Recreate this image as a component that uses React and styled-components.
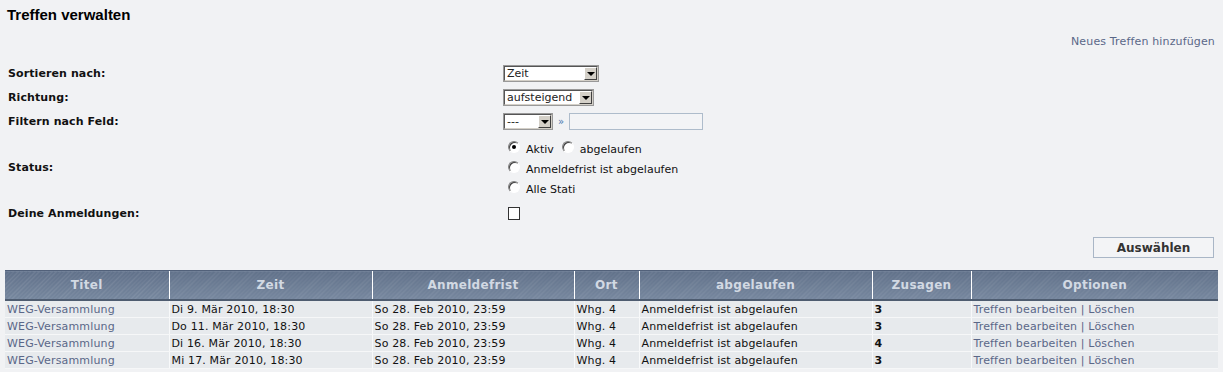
import React from 'react'
import styled, { createGlobalStyle } from 'styled-components'

const GlobalStyle = createGlobalStyle`
  html, body {
    margin: 0;
    padding: 0;
    background: #f1f2f4;
  }
  body {
    font-family: "DejaVu Sans", Verdana, sans-serif;
    font-size: 11px;
    color: #000;
  }
`

const Page = styled.div`
  width: 1223px;
  height: 372px;
  overflow: hidden;
  padding: 0 5px 0 5px;
  box-sizing: border-box;
`

const Title = styled.h2`
  margin: 0;
  padding: 6px 0 0 2px;
  height: 19px;
  font-family: "Liberation Sans", Arial, sans-serif;
  font-size: 15px;
  font-weight: bold;
  color: #000;
`

const ActionBar = styled.div`
  display: flex;
  justify-content: flex-end;
  padding: 10px 3px 0 0;
  height: 14px;
`

const Link = styled.a`
  color: #5a6788;
  text-decoration: none;
  font-size: 11px;
  letter-spacing: 0.15px;
`

const FormGrid = styled.div`
  display: grid;
  grid-template-columns: 495px 1fr;
  row-gap: 7px;
  padding: 16px 0 0 3px;
  align-items: center;
`

const Label = styled.div`
  font-weight: bold;
  font-size: 11px;
  letter-spacing: 0.1px;
  color: #111;
`

const Controls = styled.div`
  display: flex;
  align-items: center;
  gap: 4px;
  min-height: 17px;
`

const SelectBox = styled.div`
  display: flex;
  align-items: stretch;
  width: ${p => p.$width}px;
  height: 17px;
  box-sizing: border-box;
  background: #fff;
  border: 2px solid;
  border-color: #555 #d4d0c8 #d4d0c8 #555;
  outline: 1px solid #999;
  outline-offset: -1px;
  font-size: 11px;
`

const SelectText = styled.span`
  flex: 1;
  padding-left: 2px;
  line-height: 13px;
  color: #222;
  white-space: nowrap;
  overflow: hidden;
`

const SelectArrow = styled.span`
  width: 13px;
  background: #d4d0c8;
  border: 1px solid;
  border-color: #fff #404040 #404040 #fff;
  box-sizing: border-box;
  display: flex;
  align-items: center;
  justify-content: center;
  &::after {
    content: '';
    border-left: 4px solid transparent;
    border-right: 4px solid transparent;
    border-top: 4px solid #000;
  }
`

const Raquo = styled.span`
  color: #4a78b0;
  font-size: 10px;
  margin: 0 1px;
`

const TextInput = styled.div`
  width: 134px;
  height: 17px;
  box-sizing: border-box;
  border: 1px solid #aebccb;
  background: #f3f4f6;
`

const RadioStack = styled.div`
  display: flex;
  flex-direction: column;
  gap: 7px;
  padding: 6px 0 2px 5px;
`

const RadioLine = styled.div`
  display: flex;
  align-items: center;
  height: 13px;
`

const Radio = styled.span`
  width: 12px;
  height: 12px;
  box-sizing: border-box;
  border-radius: 50%;
  border: 1px solid;
  border-color: #808080 #fff #fff #808080;
  background: #fff;
  box-shadow: inset 1px 1px 0 #404040;
  display: inline-flex;
  align-items: center;
  justify-content: center;
  margin: -6px 6px 0 0;
  &::after {
    content: '';
    width: 4px;
    height: 4px;
    border-radius: 50%;
    background: ${p => (p.$checked ? '#000' : 'transparent')};
  }
`

const RadioLabel = styled.span`
  font-size: 11px;
  color: #111;
  margin-right: 8px;
`

const CheckBox = styled.span`
  width: 12px;
  height: 13px;
  box-sizing: border-box;
  border: 1px solid #333;
  background: #fff;
  margin-left: 5px;
`

const ButtonRow = styled.div`
  display: flex;
  justify-content: flex-end;
  padding: 15px 4px 0 0;
`

const Button = styled.button`
  width: 121px;
  height: 21px;
  background: #f3f4f6;
  border: 1px solid #a9b6c6;
  font-family: "DejaVu Sans", Verdana, sans-serif;
  font-size: 12px;
  font-weight: bold;
  color: #333;
  padding: 0;
`

const Table = styled.table`
  width: 1213px;
  margin-top: 12px;
  border-collapse: collapse;
  table-layout: fixed;
`

const Th = styled.th`
  height: 28px;
  padding: 0;
  border-left: 1px solid #fff;
  border-bottom: 2px solid #4e5c70;
  border-top: 1px solid #52617a;
  background: repeating-linear-gradient(
      135deg,
      rgba(255, 255, 255, 0.08) 0px,
      rgba(255, 255, 255, 0.08) 1px,
      rgba(0, 0, 0, 0) 1px,
      rgba(0, 0, 0, 0) 3px
    ),
    linear-gradient(#61718a, #76879e);
  color: #d2d9e3;
  font-size: 12px;
  letter-spacing: 0.3px;
  font-weight: bold;
  text-align: center;
  &:first-child {
    border-left: none;
  }
`

const Td = styled.td`
  height: 16px;
  padding: 0 0 0 2px;
  border-left: 1px solid #f8f9fa;
  border-bottom: 1px solid #f6f7f8;
  background: #e7eaed;
  font-size: 11px;
  letter-spacing: 0.15px;
  white-space: nowrap;
  overflow: hidden;
  color: ${p => (p.$link ? '#5a6788' : '#111')};
  font-weight: ${p => (p.$bold ? 'bold' : 'normal')};
  &:first-child {
    border-left: none;
  }
`

const columns = [
  { title: 'Titel', width: 164 },
  { title: 'Zeit', width: 203 },
  { title: 'Anmeldefrist', width: 202 },
  { title: 'Ort', width: 65 },
  { title: 'abgelaufen', width: 233 },
  { title: 'Zusagen', width: 99 },
  { title: 'Optionen', width: 247 },
]

const rows = [
  { zeit: 'Di 9. Mär 2010, 18:30', zusagen: 3 },
  { zeit: 'Do 11. Mär 2010, 18:30', zusagen: 3 },
  { zeit: 'Di 16. Mär 2010, 18:30', zusagen: 4 },
  { zeit: 'Mi 17. Mär 2010, 18:30', zusagen: 3 },
]

function Select({ width, value }) {
  return (
    <SelectBox $width={width}>
      <SelectText>{value}</SelectText>
      <SelectArrow />
    </SelectBox>
  )
}

export default function App() {
  return (
    <Page>
      <GlobalStyle />
      <Title>Treffen verwalten</Title>
      <ActionBar>
        <Link href="#">Neues Treffen hinzufügen</Link>
      </ActionBar>

      <FormGrid>
        <Label>Sortieren nach:</Label>
        <Controls>
          <Select width={96} value="Zeit" />
        </Controls>

        <Label>Richtung:</Label>
        <Controls>
          <Select width={91} value="aufsteigend" />
        </Controls>

        <Label>Filtern nach Feld:</Label>
        <Controls>
          <Select width={50} value="---" />
          <Raquo>»</Raquo>
          <TextInput />
        </Controls>

        <Label>Status:</Label>
        <RadioStack>
          <RadioLine>
            <Radio $checked />
            <RadioLabel>Aktiv</RadioLabel>
            <Radio />
            <RadioLabel>abgelaufen</RadioLabel>
          </RadioLine>
          <RadioLine>
            <Radio />
            <RadioLabel>Anmeldefrist ist abgelaufen</RadioLabel>
          </RadioLine>
          <RadioLine>
            <Radio />
            <RadioLabel>Alle Stati</RadioLabel>
          </RadioLine>
        </RadioStack>

        <Label>Deine Anmeldungen:</Label>
        <Controls>
          <CheckBox />
        </Controls>
      </FormGrid>

      <ButtonRow>
        <Button>Auswählen</Button>
      </ButtonRow>

      <Table>
        <colgroup>
          {columns.map(c => (
            <col key={c.title} style={{ width: c.width }} />
          ))}
        </colgroup>
        <thead>
          <tr>
            {columns.map(c => (
              <Th key={c.title}>{c.title}</Th>
            ))}
          </tr>
        </thead>
        <tbody>
          {rows.map((r, i) => (
            <tr key={i}>
              <Td $link>WEG-Versammlung</Td>
              <Td>{r.zeit}</Td>
              <Td>So 28. Feb 2010, 23:59</Td>
              <Td>Whg. 4</Td>
              <Td>Anmeldefrist ist abgelaufen</Td>
              <Td $bold>{r.zusagen}</Td>
              <Td $link>Treffen bearbeiten | Löschen</Td>
            </tr>
          ))}
        </tbody>
      </Table>
    </Page>
  )
}
